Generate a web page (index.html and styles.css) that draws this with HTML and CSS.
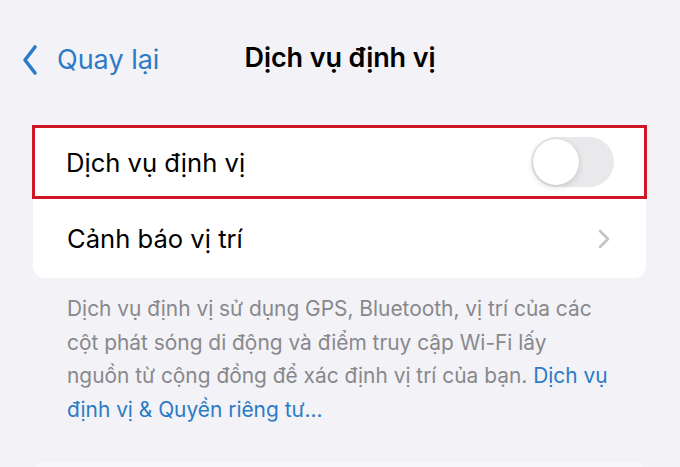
FILE: index.html
```html
<!DOCTYPE html>
<html lang="vi">

<head>
    <meta charset="UTF-8">
    <meta name="viewport" content="width=device-width, initial-scale=1.0">
    <title>Dịch vụ định vị</title>
    <link rel="stylesheet" href="styles.css">
</head>

<body>
    <div class="nav">
        <a class="back" href="#">
            <svg class="back-icon" width="16" height="32" viewBox="0 0 16 32">
                <path d="M13 3 L3 16 L13 29" fill="none" stroke="currentColor" stroke-width="3.6"
                    stroke-linecap="round" stroke-linejoin="round" />
            </svg>
            <span>Quay lại</span>
        </a>
        <h1 class="title">Dịch vụ định vị</h1>
        <div></div>
    </div>

    <div class="card">
        <div class="row row-marked">
            <span class="label">Dịch vụ định vị</span>
            <div class="toggle">
                <div class="knob"></div>
            </div>
        </div>
        <div class="row">
            <span class="label">Cảnh báo vị trí</span>
            <svg class="chevron" width="14" height="20" viewBox="0 0 14 20">
                <path d="M3 2 L11 10 L3 18" fill="none" stroke="currentColor" stroke-width="2.6"
                    stroke-linecap="round" stroke-linejoin="round" />
            </svg>
        </div>
    </div>

    <p class="note">
        Dịch vụ định vị sử dụng GPS, Bluetooth, vị trí của các<br>
        cột phát sóng di động và điểm truy cập Wi-Fi lấy<br>
        nguồn từ cộng đồng để xác định vị trí của bạn. <a href="#">Dịch vụ<br>
        định vị &amp; Quyền riêng tư...</a>
    </p>

    <div class="card card-next"></div>
</body>

</html>
```

FILE: styles.css
```css
* {
    box-sizing: border-box;
    margin: 0;
    padding: 0;
}

body {
    font-family: Inter, "Noto Sans", sans-serif;
    background-color: #f2f2f7;
    color: #000;
    overflow: hidden;
}

a {
    color: #2b7bc6;
    text-decoration: none;
}

/* Top bar */
.nav {
    display: grid;
    grid-template-columns: 1fr auto 1fr;
    align-items: center;
    height: 125px;
    padding: 0 22px 10px 22px;
}

.back {
    display: flex;
    align-items: center;
    gap: 19px;
    font-size: 27px;
    padding-top: 4px;
}

.back-icon {
    display: block;
}

.title {
    font-size: 27px;
    font-weight: 600;
    letter-spacing: -0.1px;
}

/* Settings card */
.card {
    margin: 0 34px 0 33px;
    background-color: #fff;
    border-radius: 12px;
}

.row {
    display: flex;
    align-items: center;
    justify-content: space-between;
    height: 79px;
    padding: 0 34px;
    font-size: 25.6px;
}

/* red highlight box from the screenshot */
.row-marked {
    height: 74px;
    margin: 0 -1px;
    padding: 0 30px 0 31px;
    border: 3px solid #cf1728;
}

.toggle {
    width: 83px;
    height: 50px;
    padding: 2px;
    border-radius: 25px;
    background-color: #e9e9eb;
}

.knob {
    width: 46px;
    height: 46px;
    border-radius: 50%;
    background-color: #fff;
    box-shadow: 0 2px 6px rgba(0, 0, 0, 0.15), 0 0 1px rgba(0, 0, 0, 0.1);
}

.chevron {
    color: #c4c4c7;
    margin-right: 1px;
}

/* Footer text */
.note {
    margin: 14px 30px 0 67px;
    font-size: 20.9px;
    line-height: 33.5px;
    color: #88888c;
}

.card-next {
    margin-top: 36px;
    height: 40px;
    background-color: #f7f7fa;
}
```
